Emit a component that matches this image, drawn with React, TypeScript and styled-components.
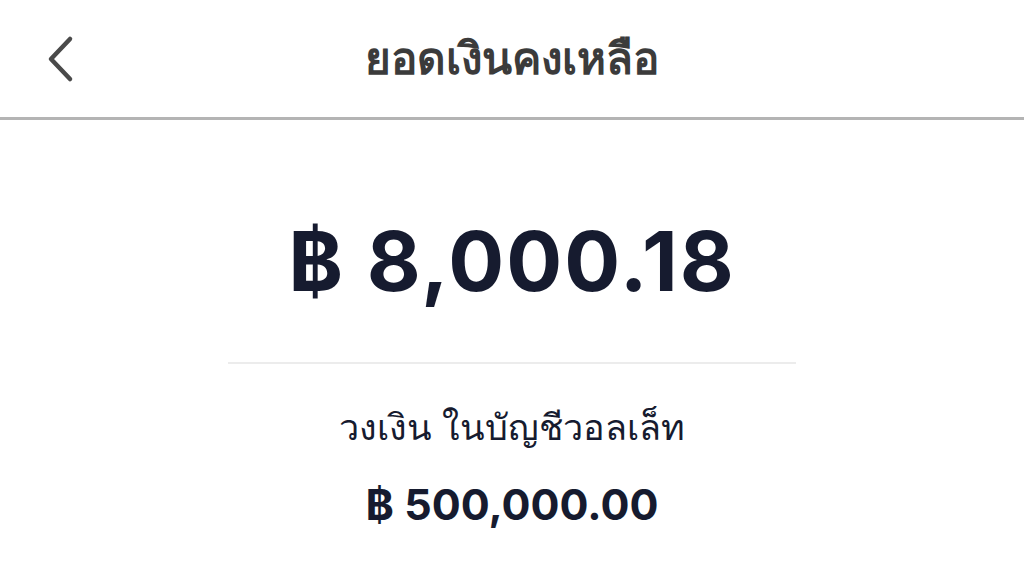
import { createGlobalStyle, styled } from 'styled-components'

const GlobalStyle = createGlobalStyle`
  html, body {
    margin: 0;
    padding: 0;
    background: #ffffff;
  }
  body {
    font-family: Inter, 'Noto Sans', sans-serif;
  }
`

const COLOR_NAVY = '#161b2f'

const Page = styled.div`
  width: 1024px;
  height: 576px;
  overflow: hidden;
  display: flex;
  flex-direction: column;
  background: #ffffff;
`

const Header = styled.header`
  height: 120px;
  box-sizing: border-box;
  border-bottom: 3px solid #b4b4b4;
  display: grid;
  grid-template-columns: 120px 1fr 120px;
  align-items: center;
`

const BackButton = styled.button`
  border: none;
  background: none;
  padding: 0 0 0 44px;
  height: 60px;
  display: flex;
  align-items: center;
  cursor: pointer;
`

const Title = styled.h1`
  margin: 0 0 2px 0;
  text-align: center;
  font-family: 'Noto Sans', sans-serif;
  font-size: 44px;
  font-weight: 700;
  color: #3b3b3b;
`

const Content = styled.main`
  display: flex;
  flex-direction: column;
  align-items: center;
`

const Balance = styled.div`
  margin-top: 91px;
  font-size: 83px;
  font-weight: 700;
  line-height: 100px;
  color: ${COLOR_NAVY};
  letter-spacing: 2px;
`

const Divider = styled.hr`
  width: 568px;
  margin: 51px 0 0 0;
  border: none;
  border-top: 2px solid #ececec;
`

const LimitLabel = styled.div`
  margin-top: 38px;
  font-family: 'Noto Sans', sans-serif;
  font-size: 36px;
  line-height: 50px;
  color: ${COLOR_NAVY};
`

const LimitValue = styled.div`
  margin-top: 26px;
  font-size: 43px;
  font-weight: 700;
  line-height: 52px;
  color: ${COLOR_NAVY};
`

export default function App() {
  return (
    <Page>
      <GlobalStyle />
      <Header>
        <BackButton aria-label="back">
          <svg width="32" height="48" viewBox="0 0 32 48" fill="none">
            <path d="M26 4 L7 24 L26 44" stroke="#4a4a4a" strokeWidth="4.5" strokeLinecap="round" strokeLinejoin="round" />
          </svg>
        </BackButton>
        <Title>ยอดเงินคงเหลือ</Title>
        <div />
      </Header>
      <Content>
        <Balance>฿ 8,000.18</Balance>
        <Divider />
        <LimitLabel>วงเงิน ในบัญชีวอลเล็ท</LimitLabel>
        <LimitValue>฿ 500,000.00</LimitValue>
      </Content>
    </Page>
  )
}
